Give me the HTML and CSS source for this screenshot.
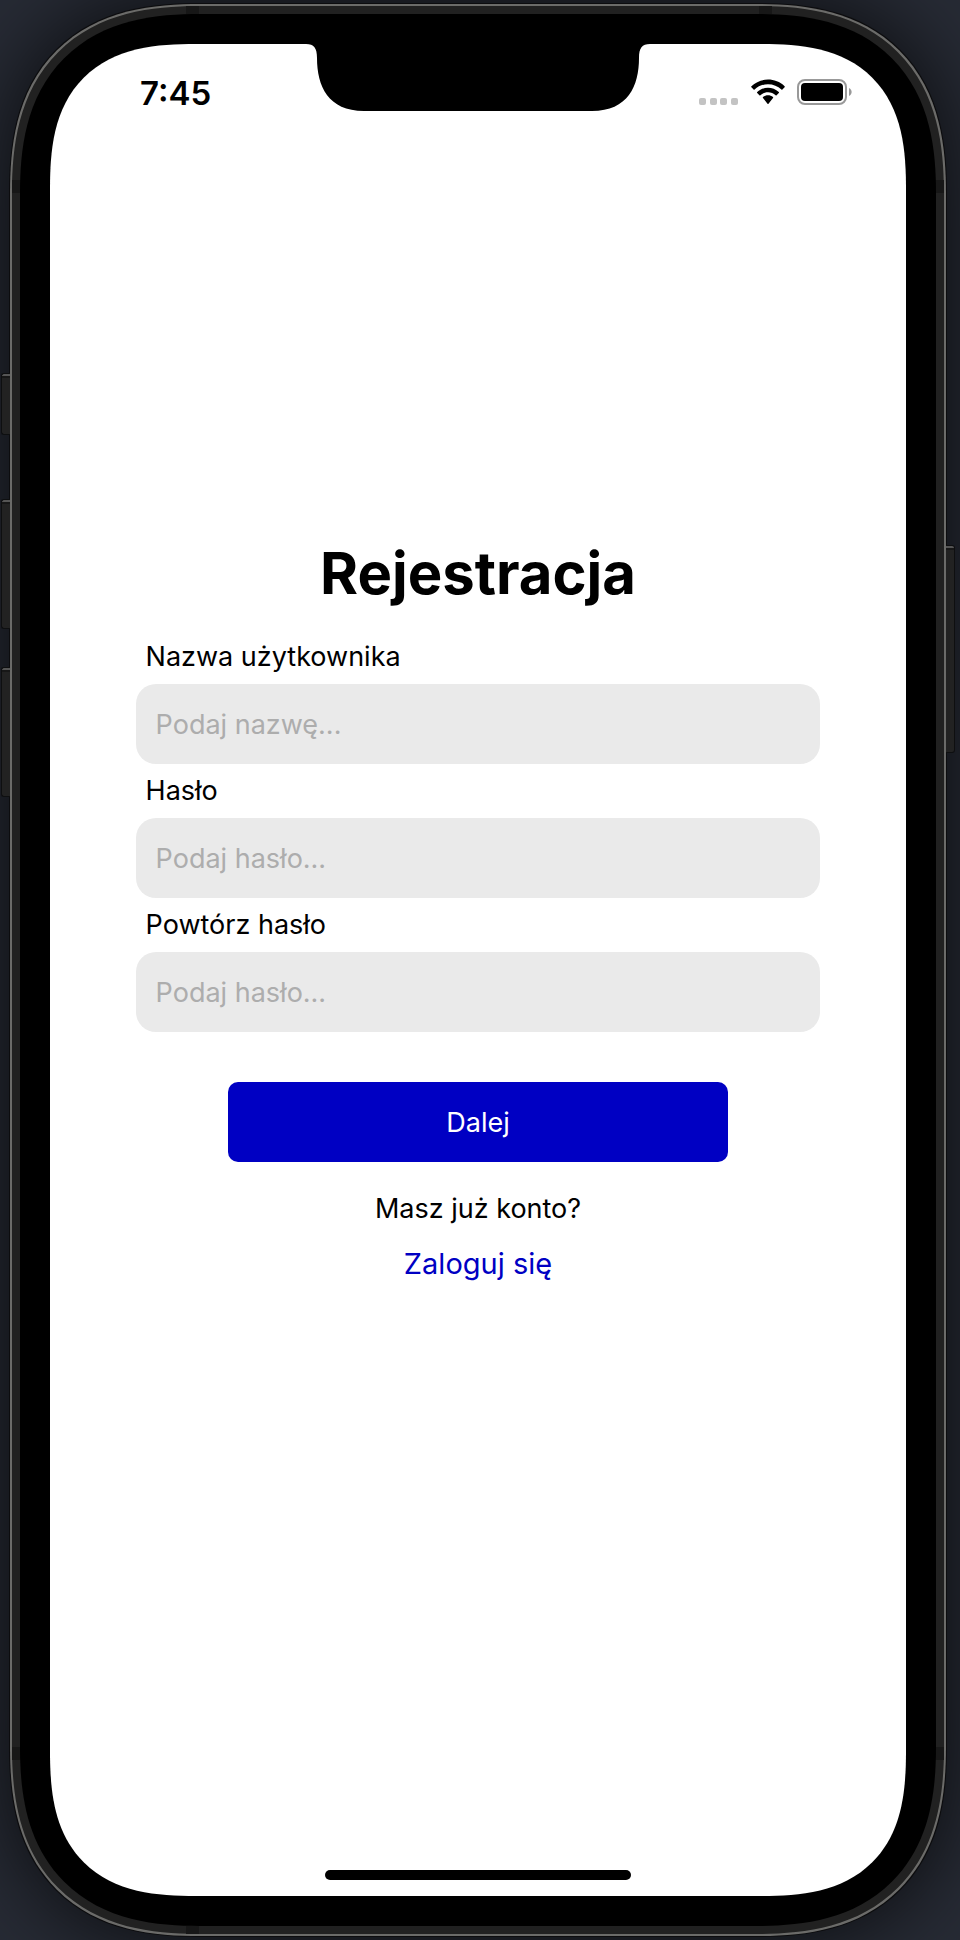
FILE: index.html
```html
<!DOCTYPE html>
<html lang="pl">
<head>
<meta charset="utf-8">
<meta name="viewport" content="width=device-width, initial-scale=1">
<title>Rejestracja</title>
<link rel="stylesheet" href="styles.css">
</head>
<body>
<div class="phone">
  <span class="key key-mute"></span>
  <span class="key key-up"></span>
  <span class="key key-down"></span>
  <span class="key key-power"></span>
  <span class="seam seam-top-left"></span>
  <span class="seam seam-top-right"></span>
  <span class="seam seam-bottom-left"></span>
  <span class="seam seam-side seam-upper"></span>
  <span class="seam seam-side seam-lower"></span>
  <div class="bezel">
    <div class="screen">
      <svg class="notch" viewBox="0 0 344 67" aria-hidden="true">
        <path d="M0 0C8 0 11 4 11 14C11 42 22 67 58 67H286C322 67 333 42 333 14C333 4 336 0 344 0Z"/>
      </svg>
      <header class="status">
        <time class="clock">7:45</time>
        <div class="indicators">
          <svg class="signal" viewBox="0 0 40 8" aria-hidden="true">
            <rect x="0" y="1" width="7" height="7" rx="2"/><rect x="11" y="1" width="7" height="7" rx="2"/><rect x="21" y="1" width="7" height="7" rx="2"/><rect x="32" y="1" width="7" height="7" rx="2"/>
          </svg>
          <svg class="wifi" viewBox="0 0 34 26" aria-hidden="true">
            <path d="M17 5.200C22.200 5.200 26.900 7.200 30.400 10.500C30.700 10.800 31.100 10.800 31.400 10.500L33.600 8.300C33.900 8 33.900 7.500 33.600 7.200C24.400-1.600 9.600-1.600.4 7.200C.1 7.500.1 8 .4 8.300L2.600 10.500C2.900 10.800 3.300 10.800 3.600 10.500C7.100 7.200 11.800 5.200 17 5.200Z"/>
            <path d="M17 13.300C19.900 13.300 22.600 14.400 24.600 16.300C24.900 16.600 25.300 16.600 25.600 16.300L27.800 14.100C28.100 13.800 28.100 13.300 27.800 13C21.700 7.300 12.300 7.300 6.200 13C5.900 13.300 5.900 13.800 6.200 14.100L8.400 16.300C8.700 16.600 9.100 16.600 9.400 16.300C11.400 14.400 14.100 13.300 17 13.300Z"/>
            <path d="M22 19C22.300 18.700 22.300 18.300 22 18C19.100 15.800 14.900 15.800 12 18C11.700 18.300 11.700 18.700 12 19L16.500 24.800C16.800 25.100 17.200 25.100 17.500 24.800Z"/>
          </svg>
          <svg class="battery" viewBox="0 0 55 26" aria-hidden="true">
            <rect class="battery-case" x="1" y="1" width="48" height="24" rx="7"/>
            <rect x="4" y="4" width="42" height="18" rx="4"/>
            <path class="battery-tip" d="M52 9C55.500 10.500 55.500 15.500 52 17Z"/>
          </svg>
        </div>
      </header>
      <main class="content">
        <form class="form">
          <h1 class="title">Rejestracja</h1>
          <label class="label" for="user">Nazwa użytkownika</label>
          <input class="field" id="user" type="text" placeholder="Podaj nazwę...">
          <label class="label" for="pass">Hasło</label>
          <input class="field" id="pass" type="password" placeholder="Podaj hasło...">
          <label class="label" for="repeat">Powtórz hasło</label>
          <input class="field" id="repeat" type="password" placeholder="Podaj hasło...">
          <button class="submit" type="submit">Dalej</button>
          <p class="question">Masz już konto?</p>
          <a class="login" href="#">Zaloguj się</a>
        </form>
      </main>
      <div class="home"></div>
    </div>
  </div>
</div>
</body>
</html>
```

FILE: styles.css
```css
* { box-sizing: border-box; }

body {
  margin: 0;
  min-height: 100vh;
  display: flex;
  padding: 4px 14px 4px 10px;
  overflow-x: hidden;
  background: #272b35;
  font-family: Inter, "Liberation Sans", sans-serif;
  color: #000;
}

.phone {
  position: relative;
  flex: 1;
  display: flex;
  padding: 8px;
  border: 2px solid #6b6b69;
  border-radius: 160px;
  background: #212121;
  box-shadow: 0 0 0 1px #0c0c0e, 0 0 90px rgba(0, 0, 0, 0.8);
}

.bezel {
  position: relative;
  flex: 1;
  display: flex;
  padding: 30px;
  border-radius: 150px;
  background: #000;
}

.screen {
  position: relative;
  flex: 1;
  display: flex;
  flex-direction: column;
  align-items: center;
  border-radius: 116px;
  background: #fff;
}

@supports (corner-shape: superellipse(1.3)) {
  .phone { border-radius: 190px; corner-shape: superellipse(1.3); }
  .bezel { border-radius: 180px; corner-shape: superellipse(1.3); }
  .screen { border-radius: 146px; corner-shape: superellipse(1.4); }
}

/* Hardware keys on the sides of the case */
.key {
  position: absolute;
  left: -11px;
  width: 9px;
  border: 1px solid #0e0f10;
  border-right: 0;
  border-radius: 3px 0 0 3px;
  background: linear-gradient(#555 2px, #171717 2px, #171717 4px, #222 4px);
}
.key-mute { top: 367px; height: 62px; }
.key-up { top: 493px; height: 130px; }
.key-down { top: 661px; height: 130px; }
.key-power {
  top: 539px;
  left: auto;
  right: -11px;
  height: 208px;
  border-right: 1px solid #0e0f10;
  border-left: 0;
  border-radius: 0 3px 3px 0;
}

/* Antenna seams in the metal band */
.seam { position: absolute; width: 13px; height: 8px; background: #171717; }
.seam-top-left { top: 0; left: 174px; }
.seam-top-right { top: 0; right: 172px; }
.seam-bottom-left { bottom: 0; left: 174px; }
.seam-side { left: 0; width: 100%; height: 13px; }
.seam-upper { top: 174px; }
.seam-lower { bottom: 174px; }

.notch {
  position: absolute;
  top: 0;
  left: 50%;
  width: 344px;
  height: 67px;
  transform: translateX(-50%);
}

.status {
  align-self: stretch;
  display: flex;
  justify-content: space-between;
  padding: 29px 54px 0 90px;
}
.clock { font-size: 33px; line-height: 40px; font-weight: 600; }
.indicators { display: flex; align-items: flex-end; gap: 12px; height: 32px; }
.signal { width: 40px; height: 8px; fill: #c3c3c3; }
.wifi { width: 34px; height: 26px; }
.battery { width: 55px; height: 26px; }
.battery-case { fill: none; stroke: #999; stroke-width: 2; }
.battery-tip { fill: #999; }

.content {
  flex: 1;
  align-self: stretch;
  display: flex;
  flex-direction: column;
  align-items: center;
  justify-content: center;
  padding-bottom: 154px;
}
.form { width: 80%; display: flex; flex-direction: column; }
.title { margin: 0 0 21px; font-size: 58px; line-height: 72px; font-weight: 700; text-align: center; }
.label { padding: 0 10px; font-size: 27px; line-height: 54px; }
.field {
  width: 100%;
  height: 80px;
  padding: 0 20px;
  border: 0;
  border-radius: 20px;
  background: #eaeaea;
  font: inherit;
  font-size: 27px;
}
.field::placeholder { color: #adadad; opacity: 1; }
.submit {
  align-self: center;
  width: 500px;
  max-width: 100%;
  height: 80px;
  margin: 50px 0 20px;
  border: 0;
  border-radius: 10px;
  background: #0000c3;
  color: #fff;
  font: inherit;
  font-size: 27px;
}
.question { margin: 0; font-size: 27px; line-height: 54px; text-align: center; }
.login { align-self: center; font-size: 29px; line-height: 56px; color: #0000c3; text-decoration: none; }

.home { width: 306px; height: 10px; margin-bottom: 16px; border-radius: 5px; background: #000; }
```
